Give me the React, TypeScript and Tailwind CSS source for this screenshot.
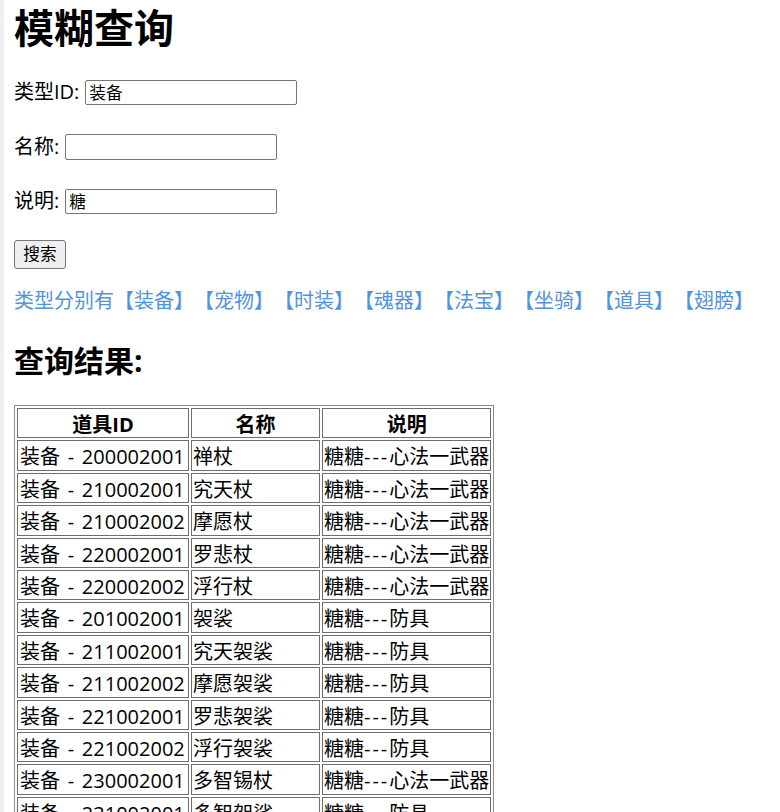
import React from "react";

const rows: [string, string, string, string][] = [
  ["200002001", "禅杖", "糖糖", "心法一武器"],
  ["210002001", "究天杖", "糖糖", "心法一武器"],
  ["210002002", "摩愿杖", "糖糖", "心法一武器"],
  ["220002001", "罗悲杖", "糖糖", "心法一武器"],
  ["220002002", "浮行杖", "糖糖", "心法一武器"],
  ["201002001", "袈裟", "糖糖", "防具"],
  ["211002001", "究天袈裟", "糖糖", "防具"],
  ["211002002", "摩愿袈裟", "糖糖", "防具"],
  ["221002001", "罗悲袈裟", "糖糖", "防具"],
  ["221002002", "浮行袈裟", "糖糖", "防具"],
  ["230002001", "多智锡杖", "糖糖", "心法一武器"],
  ["231002001", "多智袈裟", "糖糖", "防具"],
  ["231002002", "多智锡杖", "糖糖", "心法一武器"],
];

const types = ["装备", "宠物", "时装", "魂器", "法宝", "坐骑", "道具", "翅膀"];

export default function App() {
  return (
    <div
      className="h-[812px] overflow-hidden bg-white text-black border-l-4 border-[#efefef] pl-[10px] [text-spacing-trim:space-all]"
      style={{ fontFamily: '"Open Sans", "Noto Sans CJK SC", sans-serif' }}
    >
      <h1 className="text-[40px] font-bold leading-[56px] m-0">模糊查询</h1>

      <div className="mt-[19px] h-[34px] flex items-center gap-[6px] text-[20px]">
        <label>类型ID:</label>
        <input
          defaultValue="装备"
          className="w-[212px] h-[25px] border border-[#767676] rounded-[2px] px-[3px] text-[16.67px] outline-none"
        />
      </div>
      <div className="mt-[21px] h-[34px] flex items-center gap-[6px] text-[20px]">
        <label>名称:</label>
        <input className="w-[212px] h-[26px] border border-[#767676] rounded-[2px] px-[3px] text-[16.67px] outline-none" />
      </div>
      <div className="mt-[20px] h-[34px] flex items-center gap-[6px] text-[20px]">
        <label>说明:</label>
        <input
          defaultValue="糖"
          className="w-[212px] h-[25px] border border-[#767676] rounded-[2px] px-[3px] text-[16.67px] outline-none"
        />
      </div>

      <div className="mt-[22px]">
        <button className="h-[29px] w-[52px] bg-[#efefef] border border-[#767676] rounded-[3px] text-[16.67px] leading-none">
          搜索
        </button>
      </div>

      <p className="mt-[17px] text-[20px] leading-[30px] text-[#4f94dc] whitespace-nowrap [text-spacing-trim:space-all]">
        类型分别有
        {types.map((t) => (
          <span key={t}>【{t}】</span>
        ))}
      </p>

      <h2 className="mt-[25px] text-[30px] font-bold leading-[40px]">查询结果:</h2>

      <table
        className="mt-[24px] border border-[#8c8c8c] text-[20px]"
        style={{ borderCollapse: "separate", borderSpacing: "2px" }}
      >
        <thead>
          <tr>
            <th className="w-[172px] border border-[#6e6e6e] pt-[3px] pb-[0px] px-[1px] leading-[25.4px] font-bold text-center">道具ID</th>
            <th className="w-[129px] border border-[#6e6e6e] pt-[3px] pb-[0px] px-[1px] leading-[25.4px] font-bold text-center">名称</th>
            <th className="w-[169px] border border-[#6e6e6e] pt-[3px] pb-[0px] px-[1px] leading-[25.4px] font-bold text-center">说明</th>
          </tr>
        </thead>
        <tbody>
          {rows.map((r, i) => (
            <tr key={i}>
              <td className="border border-[#6e6e6e] pt-[3px] pb-[0px] px-[2px] leading-[25.4px] whitespace-nowrap">
                装备 <span className="mx-[2.5px]">-</span> {r[0]}
              </td>
              <td className="border border-[#6e6e6e] pt-[3px] pb-[0px] px-[1px] leading-[25.4px] whitespace-nowrap">{r[1]}</td>
              <td className="border border-[#6e6e6e] pt-[3px] pb-[0px] px-[1px] leading-[25.4px] whitespace-nowrap">
                {r[2]}
                <span className="tracking-[2px]">---</span>
                {r[3]}
              </td>
            </tr>
          ))}
        </tbody>
      </table>
    </div>
  );
}
